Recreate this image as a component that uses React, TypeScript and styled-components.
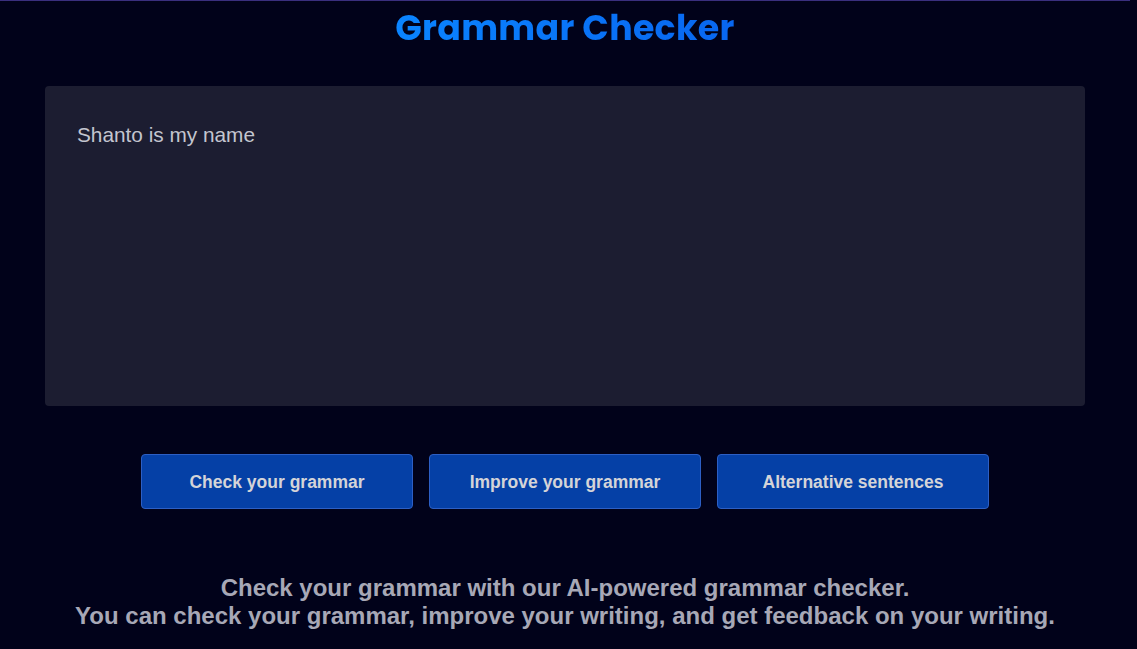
import React from "react";
import styled, { createGlobalStyle } from "styled-components";

const GlobalStyle = createGlobalStyle`
  html, body {
    margin: 0;
    padding: 0;
    background: #01021a;
  }
  body {
    font-family: "Liberation Sans", Arial, sans-serif;
  }
`;

const Page = styled.div`
  width: 1130px;
  min-height: 649px;
  box-sizing: border-box;
  border-top: 1px solid #3a2f7e;
  background: #01021a;
  display: flex;
  flex-direction: column;
  align-items: center;
`;

const Title = styled.h1`
  margin: 6px 0 0;
  font-family: "Poppins", "Inter", "Noto Sans", sans-serif;
  font-weight: 700;
  font-size: 34.8px;
  line-height: 42px;
  letter-spacing: 0.3px;
  color: #0a78ff;
  background: linear-gradient(90deg, #0a84ff, #0866f0);
  -webkit-background-clip: text;
  background-clip: text;
  -webkit-text-fill-color: transparent;
`;

const Editor = styled.textarea`
  margin-top: 37px;
  width: 1040px;
  height: 320px;
  box-sizing: border-box;
  padding: 37px 32px;
  border: none;
  border-radius: 4px;
  background: #1c1d31;
  color: #c3c5cf;
  font-family: "Liberation Sans", Arial, sans-serif;
  font-size: 20.8px;
  line-height: 24px;
  resize: none;
  outline: none;
`;

const ButtonRow = styled.div`
  margin-top: 48px;
  display: flex;
  gap: 16px;
`;

const ActionButton = styled.button`
  width: 272px;
  height: 55px;
  box-sizing: border-box;
  border: 1px solid #2d5fc4;
  border-radius: 4px;
  background: #0540a6;
  color: #d4d4d8;
  font-family: "Liberation Sans", Arial, sans-serif;
  font-weight: 700;
  font-size: 17.5px;
  padding-top: 2px;
  cursor: pointer;
`;

const Footer = styled.p`
  margin: 65px 0 0;
  text-align: center;
  font-family: "Liberation Sans", Arial, sans-serif;
  font-weight: 700;
  font-size: 24px;
  line-height: 28px;
  color: #a7a8b6;
`;

export default function App() {
  return (
    <>
      <GlobalStyle />
      <Page>
        <Title>Grammar Checker</Title>
        <Editor defaultValue="Shanto is my name" />
        <ButtonRow>
          <ActionButton>Check your grammar</ActionButton>
          <ActionButton>Improve your grammar</ActionButton>
          <ActionButton>Alternative sentences</ActionButton>
        </ButtonRow>
        <Footer>
          Check your grammar with our AI-powered grammar checker.
          <br />
          You can check your grammar, improve your writing, and get feedback on your writing.
        </Footer>
      </Page>
    </>
  );
}
